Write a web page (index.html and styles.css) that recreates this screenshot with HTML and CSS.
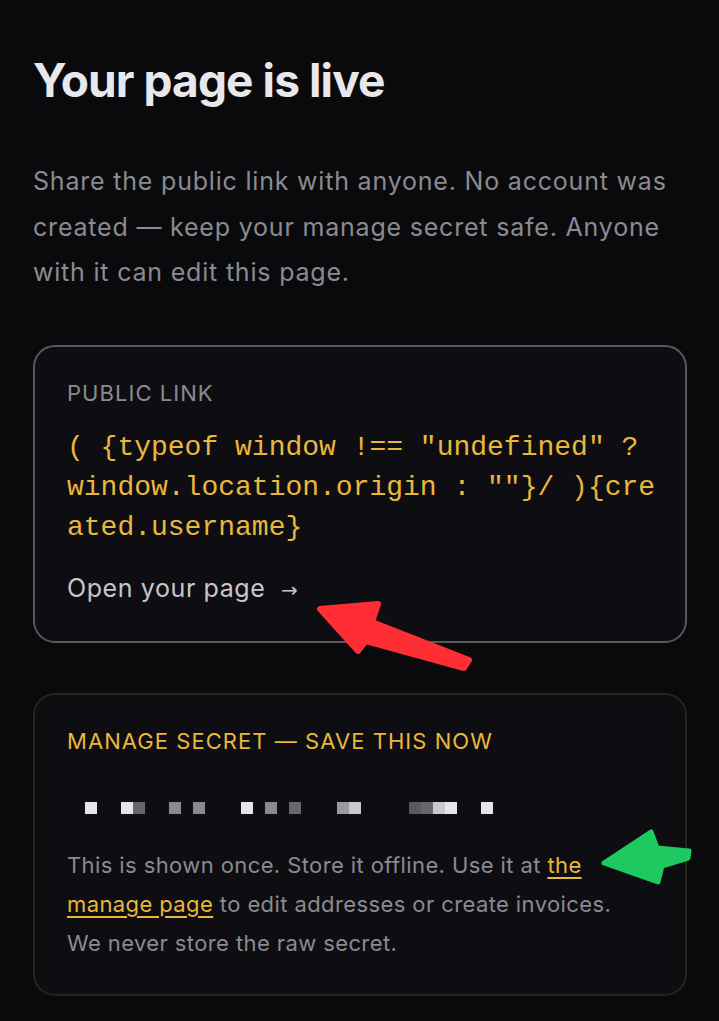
FILE: index.html
```html
<!DOCTYPE html>
<html lang="en">
<head>
<meta charset="utf-8">
<title>Your page is live</title>
<link rel="stylesheet" href="styles.css">
</head>
<body>
<main class="page">
  <h1 class="title">Your page is live</h1>
  <p class="intro">Share the public link with anyone. No account was created — keep your manage secret safe. Anyone with it can edit this page.</p>

  <section class="card card-link">
    <div class="label">PUBLIC LINK</div>
    <div class="url">( {typeof window !== "undefined" ? window.location.origin : ""}/ ){created.username}</div>
    <a class="open" href="#">Open your page <span class="arr">→</span></a>
  </section>

  <section class="card card-secret">
    <div class="label label-amber">MANAGE SECRET — SAVE THIS NOW</div>
    <div class="mosaic">
      <span class="px p1"></span><span class="px"></span><span class="px"></span><span class="px p1"></span><span class="px p4"></span><span class="px"></span><span class="px"></span><span class="px p3"></span><span class="px"></span><span class="px p3"></span><span class="px"></span><span class="px"></span><span class="px"></span><span class="px p1"></span><span class="px"></span><span class="px p3"></span><span class="px"></span><span class="px p4"></span><span class="px"></span><span class="px"></span><span class="px"></span><span class="px p3b"></span><span class="px p2"></span><span class="px"></span><span class="px"></span><span class="px"></span><span class="px"></span><span class="px p5"></span><span class="px p4"></span><span class="px p2"></span><span class="px p1"></span><span class="px"></span><span class="px"></span><span class="px p1"></span>
    </div>
    <p class="note">This is shown once. Store it offline. Use it at <a class="link" href="#">the manage page</a> to edit addresses or create invoices. We never store the raw secret.</p>
  </section>
</main>

<svg class="arrow" width="719" height="1021" viewBox="0 0 719 1021" aria-hidden="true">
  <polygon points="320,609 378,604 372,622 469,660 464,668 366,641 358,651" fill="#ff2e35" stroke="#ff2e35" stroke-width="6" stroke-linejoin="round"/>
  <polygon points="604,863 651,832 657,848 689,851 688,858 662,866 658,882" fill="#1dc960" stroke="#1dc960" stroke-width="5" stroke-linejoin="round"/>
</svg>
</body>
</html>
```

FILE: styles.css
```css
* { box-sizing: border-box; }

html, body {
  margin: 0;
  background: #0a0a0c;
}

body {
  font-family: "Inter", "Roboto", "Liberation Sans", sans-serif;
  color: #e6e6ea;
  position: relative;
  min-height: 1021px;
}

.page {
  padding: 52px 32px 40px 33px;
  display: flex;
  flex-direction: column;
}

.title {
  margin: 0;
  font-size: 46px;
  font-weight: 700;
  letter-spacing: -0.9px;
  line-height: 56px;
  color: #e8e8ec;
}

.intro {
  margin: 51px 0 0;
  font-size: 25px;
  line-height: 45.5px;
  color: #8a8a92;
  letter-spacing: 0.8px;
}

.card {
  border-radius: 22px;
  background: #0e0e12;
  padding: 30px 26px 30px 32px;
}

.card-link {
  margin-top: 49px;
  border: 2px solid #57575c;
  height: 298px;
}

.card-secret {
  margin-top: 50px;
  border: 2px solid #29241a;
  height: 303px;
}

.label {
  font-size: 22px;
  line-height: 32px;
  color: #8a8a90;
  letter-spacing: 1.05px;
}

.label-amber {
  color: #e9b73c;
}

.url {
  margin-top: 19px;
  font-family: "Liberation Mono", "DejaVu Sans Mono", monospace;
  font-size: 28px;
  line-height: 40px;
  color: #e9b73c;
  word-break: break-all;
}

.open {
  display: inline-block;
  margin-top: 23px;
  font-size: 25px;
  line-height: 34px;
  color: #c6c6cc;
  text-decoration: none;
  letter-spacing: 0.6px;
}

.arr {
  font-family: "DejaVu Sans", sans-serif;
  font-size: 20px;
  margin-left: 8px;
}

.mosaic {
  display: flex;
  margin: 45px 0 0 18px;
  height: 12px;
}

.px {
  width: 12px;
  height: 12px;
  flex: none;
}

.p1 { background: #e6e6ea; }
.p2 { background: #c9c9cd; }
.p3 { background: #8a8a8e; }
.p3b { background: #9a9a9e; }
.p4 { background: #66666c; }
.p5 { background: #5a5a5e; }

.note {
  margin: 32px 0 0;
  padding-right: 14px;
  font-size: 22px;
  line-height: 39px;
  color: #8a8a90;
  letter-spacing: 0.4px;
}

.link {
  color: #e9b73c;
  text-decoration: underline;
  text-underline-offset: 4px;
  text-decoration-thickness: 2px;
}

.arrow {
  position: absolute;
  left: 0;
  top: 0;
  pointer-events: none;
}
```
